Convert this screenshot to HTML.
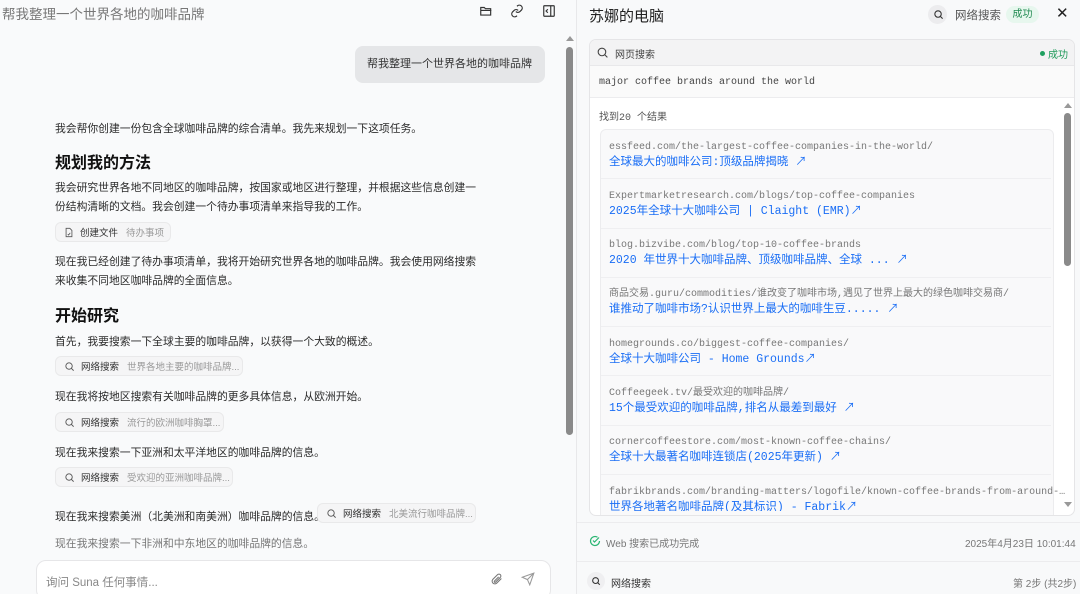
<!DOCTYPE html>
<html><head><meta charset="utf-8"><style>
*{margin:0;padding:0;box-sizing:border-box}
html,body{overflow:hidden}
body{width:1080px;height:594px;background:#f9fafb;font-family:"Liberation Sans","Noto Sans CJK SC",sans-serif;color:#222;position:relative}
.a{position:absolute;white-space:nowrap}
.p{font-size:10.8px;color:#2b2b2b}
.h{font-size:16px;font-weight:bold;color:#111}
.chip{position:absolute;height:20px;border:1px solid #e9e9ea;border-radius:6px;background:#f5f5f6;font-size:9.5px;display:flex;align-items:center;padding-left:8px;gap:6px;white-space:nowrap;overflow:hidden}
.chip b{font-weight:normal;color:#333}
.chip i{font-style:normal;color:#999;margin-left:2px}
.mono{font-family:"Liberation Mono","Noto Sans CJK SC",monospace}
.url{font-size:10px;color:#777}
.tt{font-size:11.5px;color:#1a6ef5}
svg{display:block}
</style></head><body>
<div class="a" style="left:2px;top:3px;font-size:13.5px;color:#777">帮我整理一个世界各地的咖啡品牌</div>
<svg class="a" style="left:479px;top:4px" width="14" height="14" viewBox="0 0 24 24" fill="none" stroke="#333" stroke-width="2"><path d="M3 6h6l2 2h9v11H3z"/><path d="M3 11h18"/></svg>
<svg class="a" style="left:510px;top:4px" width="14" height="14" viewBox="0 0 24 24" fill="none" stroke="#333" stroke-width="2"><path d="M10 13a5 5 0 0 0 7 0l3-3a5 5 0 0 0-7-7l-1 1"/><path d="M14 11a5 5 0 0 0-7 0l-3 3a5 5 0 0 0 7 7l1-1"/></svg>
<svg class="a" style="left:542px;top:4px" width="14" height="14" viewBox="0 0 24 24" fill="none" stroke="#333" stroke-width="2"><rect x="3" y="3" width="18" height="18" rx="1"/><path d="M15 3v18M10 9l-3 3 3 3"/></svg>
<div class="a" style="left:355px;top:46px;width:190px;height:37px;background:#e5e6e8;border-radius:8px;font-size:11px;line-height:37px;padding-left:12px;color:#333">帮我整理一个世界各地的咖啡品牌</div>
<div class="a" style="left:566px;top:36px;width:0;height:0;border-left:4px solid transparent;border-right:4px solid transparent;border-bottom:5px solid #999"></div>
<div class="a" style="left:566px;top:47px;width:7px;height:388px;background:#8a8a8a;border-radius:4px"></div>
<div class="a" style="left:576px;top:0;width:1px;height:594px;background:#e8e8ea"></div>

<div class="a p" style="left:55px;top:120px">我会帮你创建一份包含全球咖啡品牌的综合清单。我先来规划一下这项任务。</div>
<div class="a h" style="left:55px;top:149px">规划我的方法</div>
<div class="a p" style="left:55px;top:179px;line-height:19px">我会研究世界各地不同地区的咖啡品牌，按国家或地区进行整理，并根据这些信息创建一<br>份结构清晰的文档。我会创建一个待办事项清单来指导我的工作。</div>
<div class="chip" style="left:55px;top:222px;width:116px"><svg width="10" height="11" viewBox="0 0 24 24" fill="none" stroke="#555" stroke-width="2"><path d="M5 2h9l5 5v15H5z"/><path d="M9 16l2 2 4-5"/></svg><b>创建文件</b><i>待办事项</i></div>
<div class="a p" style="left:55px;top:253px;line-height:19px">现在我已经创建了待办事项清单，我将开始研究世界各地的咖啡品牌。我会使用网络搜索<br>来收集不同地区咖啡品牌的全面信息。</div>
<div class="a h" style="left:55px;top:302px">开始研究</div>
<div class="a p" style="left:55px;top:333px">首先，我要搜索一下全球主要的咖啡品牌，以获得一个大致的概述。</div>
<div class="chip" style="left:55px;top:356px;width:188px"><svg width="11" height="11" viewBox="0 0 24 24" fill="none" stroke="#555" stroke-width="2"><circle cx="11" cy="11" r="7"/><path d="M16 16l5 5"/></svg><b>网络搜索</b><i>世界各地主要的咖啡品牌...</i></div>
<div class="a p" style="left:55px;top:388px">现在我将按地区搜索有关咖啡品牌的更多具体信息，从欧洲开始。</div>
<div class="chip" style="left:55px;top:412px;width:169px"><svg width="11" height="11" viewBox="0 0 24 24" fill="none" stroke="#555" stroke-width="2"><circle cx="11" cy="11" r="7"/><path d="M16 16l5 5"/></svg><b>网络搜索</b><i>流行的欧洲咖啡胸罩...</i></div>
<div class="a p" style="left:55px;top:444px">现在我来搜索一下亚洲和太平洋地区的咖啡品牌的信息。</div>
<div class="chip" style="left:55px;top:467px;width:178px"><svg width="11" height="11" viewBox="0 0 24 24" fill="none" stroke="#555" stroke-width="2"><circle cx="11" cy="11" r="7"/><path d="M16 16l5 5"/></svg><b>网络搜索</b><i>受欢迎的亚洲咖啡品牌...</i></div>
<div class="a p" style="left:55px;top:508px">现在我来搜索美洲（北美洲和南美洲）咖啡品牌的信息。</div>
<div class="chip" style="left:317px;top:503px;width:159px"><svg width="11" height="11" viewBox="0 0 24 24" fill="none" stroke="#555" stroke-width="2"><circle cx="11" cy="11" r="7"/><path d="M16 16l5 5"/></svg><b>网络搜索</b><i>北美流行咖啡品牌...</i></div>
<div class="a p" style="left:55px;top:535px;color:#777">现在我来搜索一下非洲和中东地区的咖啡品牌的信息。</div>
<div class="a" style="left:36px;top:560px;width:515px;height:40px;background:#fff;border:1px solid #e6e6e8;border-radius:10px"></div>
<div class="a" style="left:46px;top:574px;font-size:11.5px;color:#888">询问 Suna 任何事情...</div>
<svg class="a" style="left:490px;top:572px" width="13" height="14" viewBox="0 0 24 24" fill="none" stroke="#777" stroke-width="2"><path d="M21 11l-9 9a5 5 0 0 1-7-7l9-9a3 3 0 0 1 5 5l-9 9a1.5 1.5 0 0 1-2-2l8-8"/></svg>
<svg class="a" style="left:521px;top:572px" width="14" height="14" viewBox="0 0 24 24" fill="none" stroke="#999" stroke-width="1.8"><path d="M22 2L11 13M22 2l-7 20-4-9-9-4z"/></svg>

<div class="a" style="left:577px;top:0;width:503px;height:594px;background:#f8f9fa"></div>
<div class="a" style="left:589px;top:5px;font-size:15px;color:#222">苏娜的电脑</div>
<div class="a" style="left:928px;top:5px;width:19px;height:19px;border-radius:50%;background:#ececee"></div>
<svg class="a" style="left:933px;top:9px" width="11" height="11" viewBox="0 0 24 24" fill="none" stroke="#333" stroke-width="2.4"><circle cx="11" cy="11" r="7"/><path d="M16 16l5 5"/></svg>
<div class="a" style="left:955px;top:7px;font-size:11.5px;color:#555">网络搜索</div>
<div class="a" style="left:1006px;top:6px;width:33px;height:17px;border-radius:9px;background:#e7f7ee;color:#1f8a50;font-size:10px;line-height:17px;text-align:center">成功</div>
<div class="a" style="left:1056px;top:4px;font-size:15px;color:#222">✕</div>

<div class="a" style="left:589px;top:39px;width:486px;height:477px;border:1px solid #e5e5e7;border-radius:7px;background:#fff;overflow:hidden">
  <div style="height:26px;background:#f3f3f4;border-bottom:1px solid #e8e8ea;position:relative">
    <svg class="a" style="left:6px;top:6px" width="13" height="13" viewBox="0 0 24 24" fill="none" stroke="#444" stroke-width="2"><circle cx="11" cy="11" r="7"/><path d="M16 16l5 5"/></svg>
    <div class="a" style="left:25px;top:6px;font-size:10px;color:#444">网页搜索</div>
    <div class="a" style="left:450px;top:11px;width:5px;height:5px;border-radius:50%;background:#1fa060"></div>
    <div class="a" style="left:458px;top:6px;font-size:10px;color:#1f9a5a">成功</div>
  </div>
  <div class="mono" style="height:32px;font-size:10px;color:#444;padding:11px 0 0 9px;border-bottom:1px solid #ececee;background:#fafafa">major coffee brands around the world</div>
  <div class="a mono" style="left:9px;top:68px;font-size:10px;color:#555">找到20 个结果</div>
  <div class="a" style="left:10px;top:89px;width:454px;height:400px;border:1px solid #ececee;border-radius:6px;background:#f9f9fa"></div>
  <div class="a" style="left:474px;top:63px;width:0;height:0;border-left:4px solid transparent;border-right:4px solid transparent;border-bottom:5px solid #999"></div>
  <div class="a" style="left:474px;top:73px;width:7px;height:153px;background:#8a8a8a;border-radius:4px"></div>
  <div class="a" style="left:474px;top:462px;width:0;height:0;border-left:4px solid transparent;border-right:4px solid transparent;border-top:5px solid #999"></div>
</div>
<div class="a" style="left:601px;top:178px;width:450px;height:1px;background:#efeff1"></div>
<div class="a" style="left:601px;top:228px;width:450px;height:1px;background:#efeff1"></div>
<div class="a" style="left:601px;top:277px;width:450px;height:1px;background:#efeff1"></div>
<div class="a" style="left:601px;top:326px;width:450px;height:1px;background:#efeff1"></div>
<div class="a" style="left:601px;top:375px;width:450px;height:1px;background:#efeff1"></div>
<div class="a" style="left:601px;top:425px;width:450px;height:1px;background:#efeff1"></div>
<div class="a" style="left:601px;top:474px;width:450px;height:1px;background:#efeff1"></div>
<div class="a mono" style="left:609px;top:140px;line-height:15px"><div class="url">essfeed.com/the-largest-coffee-companies-in-the-world/</div><div class="tt">全球最大的咖啡公司:顶级品牌揭晓 ↗</div></div>
<div class="a mono" style="left:609px;top:189px;line-height:15px"><div class="url">Expertmarketresearch.com/blogs/top-coffee-companies</div><div class="tt">2025年全球十大咖啡公司 | Claight (EMR)↗</div></div>
<div class="a mono" style="left:609px;top:238px;line-height:15px"><div class="url">blog.bizvibe.com/blog/top-10-coffee-brands</div><div class="tt">2020 年世界十大咖啡品牌、顶级咖啡品牌、全球 ... ↗</div></div>
<div class="a mono" style="left:609px;top:287px;line-height:15px"><div class="url">商品交易.guru/commodities/谁改变了咖啡市场,遇见了世界上最大的绿色咖啡交易商/</div><div class="tt">谁推动了咖啡市场?认识世界上最大的咖啡生豆..... ↗</div></div>
<div class="a mono" style="left:609px;top:337px;line-height:15px"><div class="url">homegrounds.co/biggest-coffee-companies/</div><div class="tt">全球十大咖啡公司 - Home Grounds↗</div></div>
<div class="a mono" style="left:609px;top:386px;line-height:15px"><div class="url">Coffeegeek.tv/最受欢迎的咖啡品牌/</div><div class="tt">15个最受欢迎的咖啡品牌,排名从最差到最好 ↗</div></div>
<div class="a mono" style="left:609px;top:435px;line-height:15px"><div class="url">cornercoffeestore.com/most-known-coffee-chains/</div><div class="tt">全球十大最著名咖啡连锁店(2025年更新) ↗</div></div>
<div class="a mono" style="left:609px;top:485px;line-height:15px;height:26px;overflow:hidden"><div class="url">fabrikbrands.com/branding-matters/logofile/known-coffee-brands-from-around-…</div><div class="tt">世界各地著名咖啡品牌(及其标识) - Fabrik↗</div></div>

<div class="a" style="left:577px;top:522px;width:503px;height:1px;background:#ececee"></div>
<svg class="a" style="left:589px;top:535px" width="12" height="12" viewBox="0 0 24 24" fill="none" stroke="#2bb673" stroke-width="2.4"><path d="M21 12a9 9 0 1 1-4-7.5"/><path d="M8 11l3 3 9-9"/></svg>
<div class="a" style="left:606px;top:535px;font-size:10px;color:#777">Web 搜索已成功完成</div>
<div class="a" style="left:965px;top:535px;font-size:10px;color:#777">2025年4月23日 10:01:44</div>
<div class="a" style="left:577px;top:561px;width:503px;height:1px;background:#ececee"></div>
<div class="a" style="left:587px;top:572px;width:18px;height:18px;border-radius:50%;background:#efeff1"></div>
<svg class="a" style="left:591px;top:576px" width="10" height="10" viewBox="0 0 24 24" fill="none" stroke="#333" stroke-width="2.6"><circle cx="11" cy="11" r="7"/><path d="M16 16l5 5"/></svg>
<div class="a" style="left:611px;top:575px;font-size:10px;color:#333">网络搜索</div>
<div class="a" style="left:1013px;top:575px;font-size:10px;color:#777">第 2步 (共2步)</div>
</body></html>
